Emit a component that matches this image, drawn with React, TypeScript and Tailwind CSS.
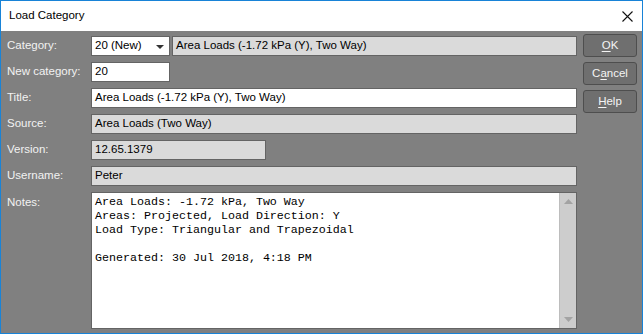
import React from 'react';

const ui = "font-['Segoe_UI','Liberation_Sans',sans-serif] text-[11.5px]";

function Field({ value, readOnly, className = '' }: { value: string; readOnly?: boolean; className?: string }) {
  return (
    <div
      className={`h-[20px] flex items-center border border-[#646464] pl-[3px] text-black whitespace-nowrap overflow-hidden ${
        readOnly ? 'bg-[#dadada]' : 'bg-white'
      } ${className}`}
    >
      {value}
    </div>
  );
}

function Row({ label, children, tall }: { label: string; children: React.ReactNode; tall?: boolean }) {
  return (
    <div className={`flex ${tall ? 'items-start' : 'items-center'}`}>
      <div className={`w-[84px] shrink-0 text-[#f2f2f2] ${tall ? 'pt-[2px]' : ''}`}>{label}</div>
      <div className="flex-1 flex gap-[2px]">{children}</div>
    </div>
  );
}

function Btn({ pre, u, post }: { pre?: string; u: string; post: string }) {
  return (
    <button className="h-[23px] w-[54px] rounded-[3px] border border-[#4e4e4e] bg-[#6f6f6f] text-[#f4f4f4] flex items-center justify-center">
      {pre}
      <span className="underline underline-offset-2">{u}</span>
      {post}
    </button>
  );
}

export default function App() {
  const notes = [
    'Area Loads: -1.72 kPa, Two Way',
    'Areas: Projected, Load Direction: Y',
    'Load Type: Triangular and Trapezoidal',
    '',
    'Generated: 30 Jul 2018, 4:18 PM',
  ];

  return (
    <div className={`w-[643px] h-[334px] border border-[#1883d7] flex flex-col ${ui}`}>
      <div className="h-[30px] bg-white flex items-center justify-between pl-[8px] pr-[9px] shrink-0">
        <span className="text-[11.5px] text-black">Load Category</span>
        <svg width="11" height="11" viewBox="0 0 11 11">
          <path d="M0.5 0.5 L10.5 10.5 M10.5 0.5 L0.5 10.5" stroke="#111" strokeWidth="1.1" />
        </svg>
      </div>

      <div className="flex-1 bg-[#808080] flex pl-[6px] pr-[4px]">
        <div className="w-[570px] pt-[5px] flex flex-col gap-[6px]">
          <Row label="Category:">
            <div className="relative w-[79px] h-[20px] bg-white border border-[#646464] flex items-center pl-[3px] text-black">
              20 (New)
              <svg className="absolute right-[5px] top-[8px]" width="8" height="4" viewBox="0 0 8 4">
                <path d="M0 0 H8 L4 4 Z" fill="#333" />
              </svg>
            </div>
            <Field value="Area Loads (-1.72 kPa (Y), Two Way)" readOnly className="flex-1" />
          </Row>
          <Row label="New category:">
            <Field value="20" className="w-[79px]" />
          </Row>
          <Row label="Title:">
            <Field value="Area Loads (-1.72 kPa (Y), Two Way)" className="flex-1" />
          </Row>
          <Row label="Source:">
            <Field value="Area Loads (Two Way)" readOnly className="flex-1" />
          </Row>
          <Row label="Version:">
            <Field value="12.65.1379" readOnly className="w-[175px]" />
          </Row>
          <Row label="Username:">
            <Field value="Peter" readOnly className="flex-1" />
          </Row>
          <Row label="Notes:" tall>
            <div className="flex-1 h-[137px] bg-white border border-[#646464] flex">
              <div className="flex-1 pl-[3px] pt-[2px] font-['Liberation_Mono',monospace] text-[11.67px] leading-[14px] text-black whitespace-pre">
                {notes.map((l, i) => (
                  <div key={i} className="h-[14px]">{l}</div>
                ))}
              </div>
              <div className="w-[17px] bg-[#cdcdcd] border-l border-[#bdbdbd] flex flex-col items-center justify-between py-[6px]">
                <svg width="9" height="5" viewBox="0 0 9 5">
                  <path d="M0 5 L4.5 0 L9 5 Z" fill="#a3a3a3" />
                </svg>
                <svg width="9" height="5" viewBox="0 0 9 5">
                  <path d="M0 0 L4.5 5 L9 0 Z" fill="#a3a3a3" />
                </svg>
              </div>
            </div>
          </Row>
        </div>

        <div className="ml-[6px] pt-[3px] flex flex-col gap-[5px]">
          <Btn u="O" post="K" />
          <Btn pre="C" u="a" post="ncel" />
          <Btn u="H" post="elp" />
        </div>
      </div>
    </div>
  );
}
